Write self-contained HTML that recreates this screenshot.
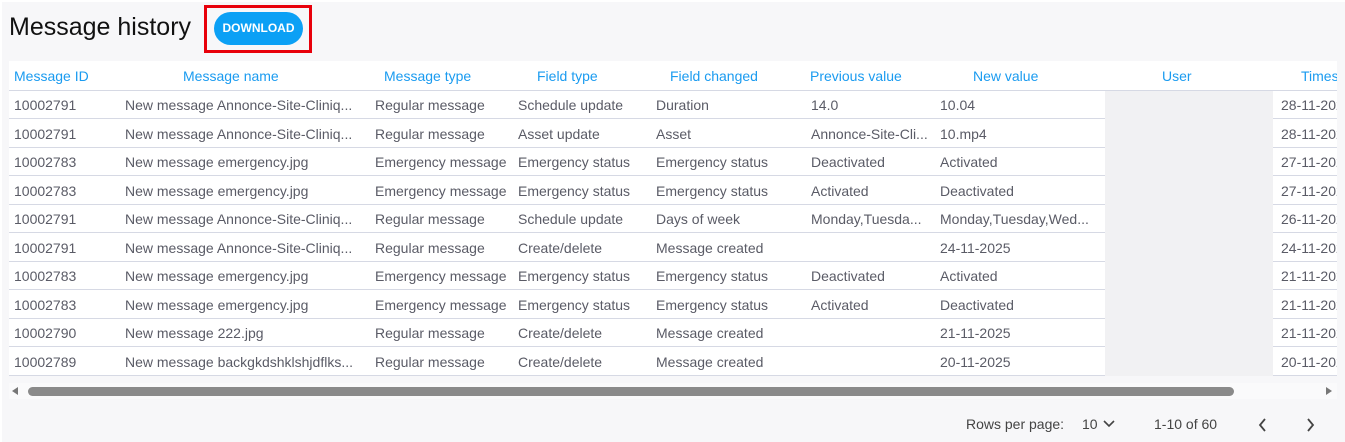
<!DOCTYPE html>
<html><head><style>
*{margin:0;padding:0;box-sizing:border-box}
body{width:1345px;height:442px;background:#fff;font-family:"Liberation Sans","DejaVu Sans",sans-serif;overflow:hidden;position:relative}
#bg{position:absolute;left:2px;top:2px;width:1343px;height:440px;background:#f7f7f9}
h1{position:absolute;left:9px;top:13px;font-size:25px;font-weight:normal;color:#111}
#box{position:absolute;left:204px;top:5px;width:108px;height:48px;border:3px solid #e8000b}
#btn{position:absolute;left:214px;top:12px;width:89px;height:33px;border-radius:17px;background:#0ba0f5;color:#fff;font-weight:bold;font-size:12px;text-align:center;line-height:33px}
#tbl{position:absolute;left:9px;top:61px;width:1328px;height:315px;background:#fff;overflow:hidden}
.r{position:absolute;left:0;width:1328px;height:28px;border-bottom:1px solid #d6d9e4}
.c{position:absolute;top:0;line-height:28px;font-size:14px;color:#5a5b66;white-space:nowrap}
.h .c{color:#1a9bf0}
#blur{position:absolute;left:1096px;top:32px;width:168px;height:283px;background:#f1f1f3}
#sb{position:absolute;left:9px;top:383px;width:1328px;height:16px;background:#fafafb}
#th{position:absolute;left:28px;top:387px;width:1206px;height:9px;border-radius:5px;background:#8a8a8a}
.f{position:absolute;top:416px;font-size:14px;color:#444}
</style></head><body>
<div id="bg"></div>
<h1>Message history</h1>
<div id="box"></div><div id="btn">DOWNLOAD</div>
<div id="tbl">
<div class="r h" style="top:0;height:30px"><span class="c" style="left:5px;line-height:30px">Message ID</span><span class="c" style="left:174px;line-height:30px">Message name</span><span class="c" style="left:375px;line-height:30px">Message type</span><span class="c" style="left:528px;line-height:30px">Field type</span><span class="c" style="left:661px;line-height:30px">Field changed</span><span class="c" style="left:801px;line-height:30px">Previous value</span><span class="c" style="left:964px;line-height:30px">New value</span><span class="c" style="left:1153px;line-height:30px">User</span><span class="c" style="left:1292px;line-height:30px">Timestamp</span></div>
<div id="blur"></div>
</div>
<div id="rows"></div>
<div id="sb"></div>
<div style="position:absolute;left:12px;top:387px;width:0;height:0;border-top:4px solid transparent;border-bottom:4px solid transparent;border-right:6px solid #777"></div>
<div style="position:absolute;left:1326px;top:387px;width:0;height:0;border-top:4px solid transparent;border-bottom:4px solid transparent;border-left:6px solid #777"></div>
<div id="th"></div>
<span class="f" style="left:966px">Rows per page:</span>
<span class="f" style="left:1082px">10</span>
<svg style="position:absolute;left:1103px;top:420px" width="12" height="8"><path d="M1 1 L6 6 L11 1" stroke="#444" stroke-width="1.6" fill="none"/></svg>
<span class="f" style="left:1154px">1-10 of 60</span>
<svg style="position:absolute;left:1258px;top:418px" width="10" height="14"><path d="M7 1 L2 7 L7 13" stroke="#444" stroke-width="1.8" fill="none"/></svg>
<svg style="position:absolute;left:1306px;top:418px" width="10" height="14"><path d="M2 1 L7 7 L2 13" stroke="#444" stroke-width="1.8" fill="none"/></svg>
<div style="position:absolute;left:9px;top:91px;width:1328px;height:285px;">
<div class="r" style="top:0"><span class="c" style="left:5px">10002791</span><span class="c" style="left:116px">New message Annonce-Site-Cliniq...</span><span class="c" style="left:366px">Regular message</span><span class="c" style="left:509px">Schedule update</span><span class="c" style="left:647px">Duration</span><span class="c" style="left:802px">14.0</span><span class="c" style="left:931px">10.04</span><span class="c" style="left:1272px">28-11-2025</span></div>
<div class="r" style="top:28.5px"><span class="c" style="left:5px">10002791</span><span class="c" style="left:116px">New message Annonce-Site-Cliniq...</span><span class="c" style="left:366px">Regular message</span><span class="c" style="left:509px">Asset update</span><span class="c" style="left:647px">Asset</span><span class="c" style="left:802px">Annonce-Site-Cli...</span><span class="c" style="left:931px">10.mp4</span><span class="c" style="left:1272px">28-11-2025</span></div>
<div class="r" style="top:57px"><span class="c" style="left:5px">10002783</span><span class="c" style="left:116px">New message emergency.jpg</span><span class="c" style="left:366px">Emergency message</span><span class="c" style="left:509px">Emergency status</span><span class="c" style="left:647px">Emergency status</span><span class="c" style="left:802px">Deactivated</span><span class="c" style="left:931px">Activated</span><span class="c" style="left:1272px">27-11-2025</span></div>
<div class="r" style="top:85.5px"><span class="c" style="left:5px">10002783</span><span class="c" style="left:116px">New message emergency.jpg</span><span class="c" style="left:366px">Emergency message</span><span class="c" style="left:509px">Emergency status</span><span class="c" style="left:647px">Emergency status</span><span class="c" style="left:802px">Activated</span><span class="c" style="left:931px">Deactivated</span><span class="c" style="left:1272px">27-11-2025</span></div>
<div class="r" style="top:114px"><span class="c" style="left:5px">10002791</span><span class="c" style="left:116px">New message Annonce-Site-Cliniq...</span><span class="c" style="left:366px">Regular message</span><span class="c" style="left:509px">Schedule update</span><span class="c" style="left:647px">Days of week</span><span class="c" style="left:802px">Monday,Tuesda...</span><span class="c" style="left:931px">Monday,Tuesday,Wed...</span><span class="c" style="left:1272px">26-11-2025</span></div>
<div class="r" style="top:142.5px"><span class="c" style="left:5px">10002791</span><span class="c" style="left:116px">New message Annonce-Site-Cliniq...</span><span class="c" style="left:366px">Regular message</span><span class="c" style="left:509px">Create/delete</span><span class="c" style="left:647px">Message created</span><span class="c" style="left:931px">24-11-2025</span><span class="c" style="left:1272px">24-11-2025</span></div>
<div class="r" style="top:171px"><span class="c" style="left:5px">10002783</span><span class="c" style="left:116px">New message emergency.jpg</span><span class="c" style="left:366px">Emergency message</span><span class="c" style="left:509px">Emergency status</span><span class="c" style="left:647px">Emergency status</span><span class="c" style="left:802px">Deactivated</span><span class="c" style="left:931px">Activated</span><span class="c" style="left:1272px">21-11-2025</span></div>
<div class="r" style="top:199.5px"><span class="c" style="left:5px">10002783</span><span class="c" style="left:116px">New message emergency.jpg</span><span class="c" style="left:366px">Emergency message</span><span class="c" style="left:509px">Emergency status</span><span class="c" style="left:647px">Emergency status</span><span class="c" style="left:802px">Activated</span><span class="c" style="left:931px">Deactivated</span><span class="c" style="left:1272px">21-11-2025</span></div>
<div class="r" style="top:228px"><span class="c" style="left:5px">10002790</span><span class="c" style="left:116px">New message 222.jpg</span><span class="c" style="left:366px">Regular message</span><span class="c" style="left:509px">Create/delete</span><span class="c" style="left:647px">Message created</span><span class="c" style="left:931px">21-11-2025</span><span class="c" style="left:1272px">21-11-2025</span></div>
<div class="r" style="top:256.5px"><span class="c" style="left:5px">10002789</span><span class="c" style="left:116px">New message backgkdshklshjdflks...</span><span class="c" style="left:366px">Regular message</span><span class="c" style="left:509px">Create/delete</span><span class="c" style="left:647px">Message created</span><span class="c" style="left:931px">20-11-2025</span><span class="c" style="left:1272px">20-11-2025</span></div>
<div style="position:absolute;left:1096px;top:0;width:168px;height:285px;background:#f1f1f3"></div>
<div style="position:absolute;left:1264px;top:0;width:64px;height:285px;overflow:hidden"></div>
</div>
<div style="position:absolute;left:1337px;top:61px;width:8px;height:320px;background:#f7f7f9"></div>
</body></html>
